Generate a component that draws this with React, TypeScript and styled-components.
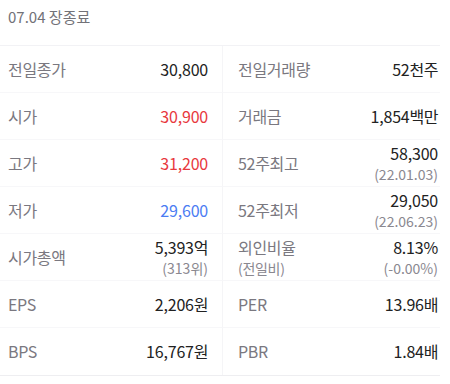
import React from 'react';
import styled, { createGlobalStyle } from 'styled-components';

type Tone = 'up' | 'down' | 'none';

interface Stat {
  label: string;
  sub?: string;
  value: string;
  unit?: string;
  note?: string;
  tone?: Tone;
}

const rows: [Stat, Stat][] = [
  [
    { label: '전일종가', value: '30,800' },
    { label: '전일거래량', value: '52', unit: '천주' },
  ],
  [
    { label: '시가', value: '30,900', tone: 'up' },
    { label: '거래금', value: '1,854', unit: '백만' },
  ],
  [
    { label: '고가', value: '31,200', tone: 'up' },
    { label: '52주최고', value: '58,300', note: '(22.01.03)' },
  ],
  [
    { label: '저가', value: '29,600', tone: 'down' },
    { label: '52주최저', value: '29,050', note: '(22.06.23)' },
  ],
  [
    { label: '시가총액', value: '5,393', unit: '억', note: '(313위)' },
    { label: '외인비율', sub: '(전일비)', value: '8.13%', note: '(-0.00%)' },
  ],
  [
    { label: 'EPS', value: '2,206', unit: '원' },
    { label: 'PER', value: '13.96', unit: '배' },
  ],
  [
    { label: 'BPS', value: '16,767', unit: '원' },
    { label: 'PBR', value: '1.84', unit: '배' },
  ],
];

const toneColor: Record<Tone, string> = {
  up: '#e8383d',
  down: '#4b7cf3',
  none: '#222222',
};

const GlobalStyle = createGlobalStyle`
  html, body {
    margin: 0;
    padding: 0;
    background: #ffffff;
  }
  body {
    font-family: "Noto Sans CJK KR", "Noto Sans", sans-serif;
    -webkit-font-smoothing: antialiased;
  }
`;

const Wrapper = styled.section`
  width: 440px;
`;

const Header = styled.div`
  height: 46px;
  padding: 7px 8px 0;
  box-sizing: border-box;
  font-size: 15px;
  line-height: 20px;
  color: #727278;
  border-bottom: 1px solid #f2f2f5;
`;

const Grid = styled.div`
  display: grid;
  grid-template-columns: 223px 217px;
  border-bottom: 1px solid #eeeef1;
`;

const Cell = styled.div<{ $side: 'left' | 'right' }>`
  height: 47px;
  box-sizing: border-box;
  display: flex;
  align-items: center;
  justify-content: space-between;
  padding: ${({ $side }) => ($side === 'left' ? '0 14px 0 8px' : '0 2px 0 15px')};
  border-bottom: 1px solid #f7f7f9;
  border-right: ${({ $side }) => ($side === 'left' ? '1px solid #f5f5f7' : 'none')};

  &:nth-last-child(-n + 2) {
    border-bottom: none;
  }
`;

const Label = styled.div`
  display: flex;
  flex-direction: column;
  font-size: 16px;
  line-height: 21px;
  color: #7a7880;
  letter-spacing: -0.3px;
`;

const SubLabel = styled.span`
  font-size: 14px;
  line-height: 20px;
  color: #8a8890;
`;

const Value = styled.div`
  display: flex;
  flex-direction: column;
  align-items: flex-end;
  text-align: right;
`;

const Main = styled.span<{ $tone: Tone }>`
  font-size: 16px;
  line-height: 21px;
  color: ${({ $tone }) => toneColor[$tone]};
  letter-spacing: -0.2px;
`;

const Unit = styled.span`
  font-size: 16px;
  letter-spacing: -0.5px;
`;

const Note = styled.span`
  font-size: 14px;
  line-height: 20px;
  color: #8a8890;
`;

function StatCell({ stat, side }: { stat: Stat; side: 'left' | 'right' }) {
  return (
    <Cell $side={side}>
      <Label>
        {stat.label}
        {stat.sub && <SubLabel>{stat.sub}</SubLabel>}
      </Label>
      <Value>
        <Main $tone={stat.tone || 'none'}>
          {stat.value}
          {stat.unit && <Unit>{stat.unit}</Unit>}
        </Main>
        {stat.note && <Note>{stat.note}</Note>}
      </Value>
    </Cell>
  );
}

export default function App() {
  return (
    <>
      <GlobalStyle />
      <Wrapper>
        <Header>07.04 장종료</Header>
        <Grid>
          {rows.map(([left, right]) => (
            <React.Fragment key={left.label}>
              <StatCell stat={left} side="left" />
              <StatCell stat={right} side="right" />
            </React.Fragment>
          ))}
        </Grid>
      </Wrapper>
    </>
  );
}
